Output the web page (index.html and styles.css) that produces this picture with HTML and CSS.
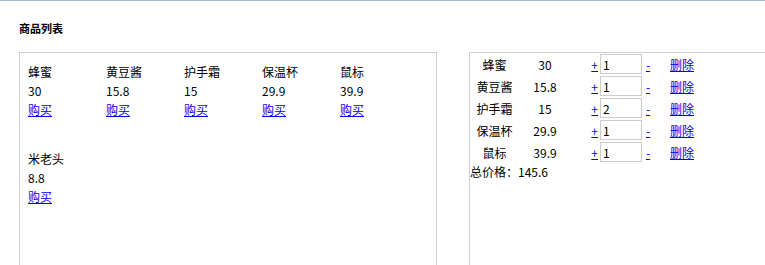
FILE: index.html
```html
<!DOCTYPE html>
<html lang="zh-CN">
<head>
    <meta charset="UTF-8">
    <title>商品列表</title>
    <link rel="stylesheet" href="styles.css">
</head>
<body>
    <h3 class="title">商品列表</h3>
    <div class="main">
        <!-- 商品 -->
        <div class="goods">
            <div class="item"><div>蜂蜜</div><div>30</div><a href="#">购买</a></div>
            <div class="item"><div>黄豆酱</div><div>15.8</div><a href="#">购买</a></div>
            <div class="item"><div>护手霜</div><div>15</div><a href="#">购买</a></div>
            <div class="item"><div>保温杯</div><div>29.9</div><a href="#">购买</a></div>
            <div class="item"><div>鼠标</div><div>39.9</div><a href="#">购买</a></div>
            <div class="item"><div>米老头</div><div>8.8</div><a href="#">购买</a></div>
        </div>

        <!-- 购物车 -->
        <div class="cart">
            <table>
                <tr>
                    <td class="c-name">蜂蜜</td><td class="c-price">30</td>
                    <td class="c-plus"><a href="#">+</a></td><td class="c-num"><input type="text" value="1"></td>
                    <td class="c-minus"><a href="#">-</a></td><td class="c-del"><a href="#">删除</a></td>
                </tr>
                <tr>
                    <td class="c-name">黄豆酱</td><td class="c-price">15.8</td>
                    <td class="c-plus"><a href="#">+</a></td><td class="c-num"><input type="text" value="1"></td>
                    <td class="c-minus"><a href="#">-</a></td><td class="c-del"><a href="#">删除</a></td>
                </tr>
                <tr>
                    <td class="c-name">护手霜</td><td class="c-price">15</td>
                    <td class="c-plus"><a href="#">+</a></td><td class="c-num"><input type="text" value="2"></td>
                    <td class="c-minus"><a href="#">-</a></td><td class="c-del"><a href="#">删除</a></td>
                </tr>
                <tr>
                    <td class="c-name">保温杯</td><td class="c-price">29.9</td>
                    <td class="c-plus"><a href="#">+</a></td><td class="c-num"><input type="text" value="1"></td>
                    <td class="c-minus"><a href="#">-</a></td><td class="c-del"><a href="#">删除</a></td>
                </tr>
                <tr>
                    <td class="c-name">鼠标</td><td class="c-price">39.9</td>
                    <td class="c-plus"><a href="#">+</a></td><td class="c-num"><input type="text" value="1"></td>
                    <td class="c-minus"><a href="#">-</a></td><td class="c-del"><a href="#">删除</a></td>
                </tr>
            </table>
            <div class="total">总价格：145.6</div>
        </div>
    </div>
</body>
</html>
```

FILE: styles.css
```css
html {
    overflow: hidden;
}
body {
    margin: 0;
    border-top: 1px solid #a9bcd5;
    font-family: "Microsoft YaHei", "Noto Sans CJK SC", sans-serif;
    font-size: 12px;
    color: #000;
}
a {
    color: #0000ee;
}
.title {
    margin: 19px 0 0 19px;
    font-size: 11px;
    line-height: 16px;
    font-weight: bold;
}
.main {
    display: flex;
    gap: 32px;
    margin: 16px 0 0 19px;
}
.goods {
    width: 408px;
    height: 240px;
    flex-shrink: 0;
    border: 1px solid #cfcfcf;
    padding: 9px 0 0 8px;
    display: flex;
    flex-wrap: wrap;
    align-content: flex-start;
}
.item {
    width: 78px;
    line-height: 19px;
    margin-bottom: 30px;
}
.item a {
    display: block;
    width: fit-content;
}
.cart {
    width: 320px;
    height: 248px;
    flex-shrink: 0;
    border: 1px solid #cfcfcf;
}
.cart table {
    border-collapse: collapse;
    table-layout: fixed;
}
.cart td {
    padding: 0;
    height: 22px;
}
.c-name {
    width: 49px;
    text-align: center;
}
.c-price {
    width: 52px;
    text-align: center;
}
.c-plus {
    width: 27px;
    text-align: right;
    padding-right: 2px !important;
}
.c-num {
    width: 44px;
}
.c-num input {
    display: block;
    width: 42px;
    height: 20px;
    box-sizing: border-box;
    border: 1px solid #cccccc;
    padding: 0 2px;
    font-family: inherit;
    font-size: 12px;
}
.c-minus {
    width: 24px;
    padding-left: 2px !important;
}
.c-del {
    width: 40px;
}
.total {
    line-height: 18px;
}
```
